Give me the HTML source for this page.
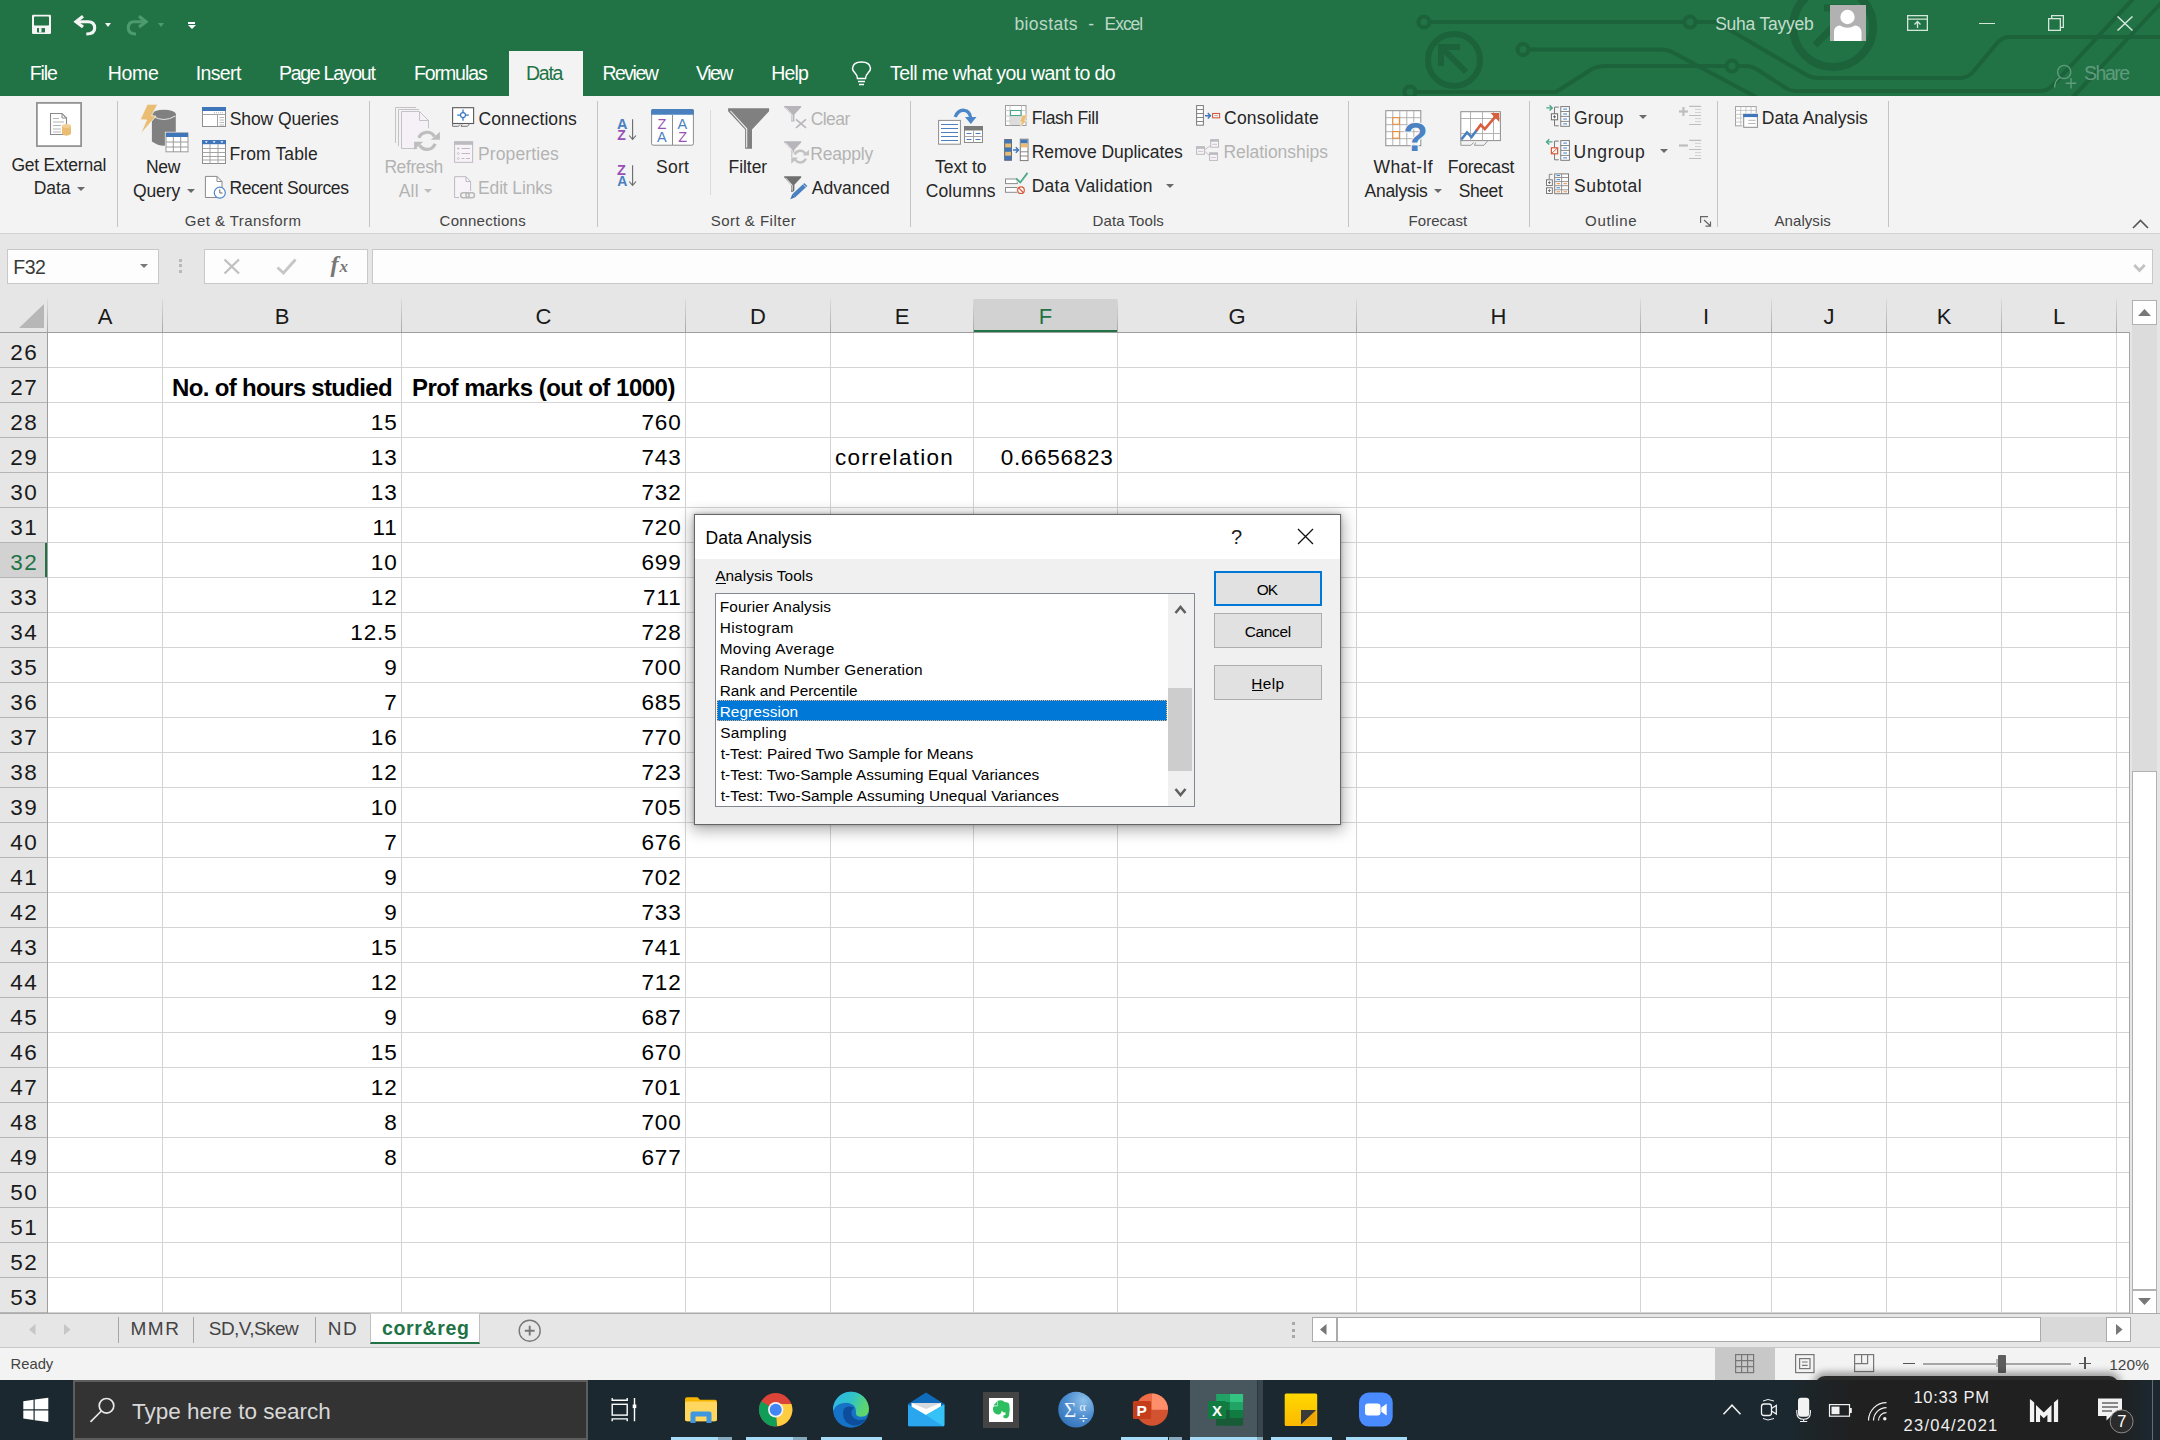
<!DOCTYPE html>
<html><head><meta charset="utf-8"><title>biostats - Excel</title>
<style>
*{box-sizing:border-box;margin:0;padding:0}
html,body{width:2160px;height:1440px;overflow:hidden;background:#fff;font-family:"Liberation Sans",sans-serif;}
.a{position:absolute;white-space:pre;line-height:1}
#titlebar{position:absolute;left:0;top:0;width:2160px;height:96px;background:#217346;overflow:hidden}
#ribbon{position:absolute;left:0;top:96px;width:2160px;height:138px;background:#f3f3f3;border-bottom:1px solid #d2d2d2}
#fbar{position:absolute;left:0;top:234px;width:2160px;height:65px;background:#e6e6e6}
#sheet{position:absolute;left:0;top:299px;width:2160px;height:1014px;background:#fff;overflow:hidden}
#tabsbar{position:absolute;left:0;top:1313px;width:2160px;height:34px;background:#e6e6e6}
#status{position:absolute;left:0;top:1347px;width:2160px;height:33px;background:#f3f3f3}
#taskbar{position:absolute;left:0;top:1380px;width:2160px;height:60px;background:#1b282f;overflow:hidden}
/* ribbon tabs */
.tab{position:absolute;top:48px;height:48px;color:#fff;font-size:19px;line-height:48px;white-space:pre;letter-spacing:-0.3px}
/* ribbon text */
.rt{position:absolute;white-space:pre;font-size:17.5px;line-height:22px;color:#262626;letter-spacing:-0.35px}
.rt.dis{color:#b1b1b1}
.rg{position:absolute;white-space:pre;font-size:16px;line-height:20px;color:#3b3b3b;letter-spacing:-0.2px;top:116px;text-align:center}
.sep{position:absolute;top:5px;width:1px;height:126px;background:#c4c4c4}
.dd{position:absolute;width:0;height:0;border-left:4px solid transparent;border-right:4px solid transparent;border-top:4px solid #6a6a6a}
.dd.dis{border-top-color:#bdbdbd}
/* sheet */
.ch{position:absolute;top:0;height:33px;font-size:22px;line-height:36px;text-align:center;color:#1a1a1a}
.rh{position:absolute;left:0;width:47px;height:35px;font-size:22.5px;letter-spacing:1.4px;padding-left:1.4px;line-height:39px;text-align:center;color:#1a1a1a}
.cell{position:absolute;height:35px;font-size:22.5px;line-height:40px;color:#000;white-space:pre}
.num{text-align:right;padding-right:3.5px;letter-spacing:0.85px}
</style></head>
<body>
<div id="titlebar"><svg class="a" style="left:1380px;top:0" width="780" height="96" viewBox="1380 0 780 96" fill="none" stroke="#1c633b" stroke-width="4" stroke-linejoin="round">
<path d="M1430 22H1684"/><circle cx="1424" cy="22" r="5.5"/><circle cx="1690" cy="22" r="5.5"/>
<path d="M1696 22H1716L1805 74Q1811 78 1819 78H1960Q1968 78 1973 72L1998 42Q2003 37 2010 37H2160"/>
<path d="M1529 49.5H1660Q1668 49.5 1674 53L1756 97"/><circle cx="1523" cy="49.5" r="5.5"/>
<path d="M1416 92H1556L1592 69Q1598 66 1606 66H1726"/><circle cx="1410" cy="92" r="5.5"/><circle cx="1732" cy="66" r="5.5"/>
<path d="M1738 66H1745Q1752 66 1758 70L1786 88Q1790 91 1798 91H2040Q2047 91 2052 86L2134 -2"/>
<path d="M2072 98L2162 2"/>
<circle cx="1833" cy="27" r="40" stroke-width="8"/>
<path d="M1815 45L1848 12M1824 8H1852V36" stroke-width="7" stroke-linejoin="miter"/>
<circle cx="1454" cy="60" r="26" stroke-width="6"/>
<path d="M1466 72L1444 50M1441 66V47H1460" stroke-width="6" stroke-linejoin="miter"/>
</svg>
<svg class="a" style="left:31px;top:14px" width="22" height="21" viewBox="31 14 22 21"><rect x="32" y="14.700" width="19" height="19.200" rx="1.200" fill="#f4f4f4"/><rect x="34" y="16.600" width="15" height="9" rx="0.800" fill="#217346"/><rect x="37" y="28.100" width="8" height="4.300" fill="#217346"/><rect x="39" y="28.100" width="2.500" height="4.300" fill="#f4f4f4"/></svg>
<svg class="a" style="left:72px;top:14px" width="26" height="23" viewBox="72 14 26 23"><path d="M83 16.300L76 21.700L83 27.100" fill="none" stroke="#f4f4f4" stroke-width="3.200"/><path d="M77 21.700H88Q94.700 21.700 94.700 28Q94.700 34 86.300 34" fill="none" stroke="#f4f4f4" stroke-width="3.100"/></svg>
<div class="dd" style="left:105px;top:23px;border-top-color:#f4f4f4;border-left-width:3.600px;border-right-width:3.600px;border-top-width:4.200px"></div>
<svg class="a" style="left:125px;top:14px" width="26" height="23" viewBox="125 14 26 23"><path d="M139 16.300L146 21.700L139 27.100" fill="none" stroke="#4e9a70" stroke-width="3.200"/><path d="M145 21.700H134Q128.300 21.700 128.300 28Q128.300 34 136 34" fill="none" stroke="#4e9a70" stroke-width="3.100"/></svg>
<div class="dd" style="left:158px;top:23px;border-top-color:#4e9a70;border-left-width:3.600px;border-right-width:3.600px;border-top-width:4.200px"></div>
<div class="a" style="left:188px;top:22px;width:7px;height:1.600px;background:#fff"></div><div class="dd" style="left:187.500px;top:25px;border-top-color:#fff;border-top-width:4.400px"></div>
<div class="a" style="left:1014.4px;top:16.0px;font-size:17.5px;color:#bcd8c6;letter-spacing:0.41px;">biostats</div>
<div class="a" style="left:1088.3px;top:16.0px;font-size:17.5px;color:#bcd8c6;letter-spacing:0.67px;">-</div>
<div class="a" style="left:1104.6px;top:16.0px;font-size:17.5px;color:#bcd8c6;letter-spacing:-1.06px;">Excel</div>
<div class="a" style="left:1715.2px;top:16.0px;font-size:17.5px;color:#c3ddcc;letter-spacing:-0.24px;">Suha Tayyeb</div>
<svg class="a" style="left:1830px;top:5px" width="36" height="36" viewBox="0 0 36 36"><rect width="36" height="36" fill="#b1b1b1"/><circle cx="17.5" cy="12" r="7.2" fill="#fff"/><path d="M4 36V27Q4 21 10 20.5Q17.5 25 25 20.5Q31 21 31.500 27V36z" fill="#fff"/></svg>
<svg class="a" style="left:1907px;top:15px" width="21" height="16" viewBox="0 0 21 16" fill="none" stroke="#d3e6da" stroke-width="1.3"><rect x="0.65" y="0.65" width="19.7" height="14.7"/><path d="M0.65 4.2H20.3M10.5 13V6.5M7.5 9.5L10.5 6.5L13.5 9.5"/></svg>
<div class="a" style="left:1979px;top:22.5px;width:16px;height:1.5px;background:#d3e6da"></div>
<svg class="a" style="left:2048px;top:15px" width="17" height="16" viewBox="0 0 17 16" fill="none" stroke="#d3e6da" stroke-width="1.3"><rect x="0.65" y="3.65" width="11.7" height="11.7"/><path d="M3.65 3.65V0.65H15.35V12.35H12.35"/></svg>
<svg class="a" style="left:2117px;top:15.500px" width="16" height="15" viewBox="0 0 16 15" fill="none" stroke="#d3e6da" stroke-width="1.5"><path d="M0.5 0.5L15.5 14.500M15.5 0.5L0.5 14.500"/></svg>
<div class="a" style="left:509px;top:51px;width:74px;height:45px;background:#f3f3f3"></div>
<div class="a" style="left:29.7px;top:64.0px;font-size:19.5px;color:#fff;letter-spacing:-1.09px;">File</div>
<div class="a" style="left:107.7px;top:64.0px;font-size:19.5px;color:#fff;letter-spacing:-0.29px;">Home</div>
<div class="a" style="left:195.7px;top:64.0px;font-size:19.5px;color:#fff;letter-spacing:-0.63px;">Insert</div>
<div class="a" style="left:278.9px;top:64.0px;font-size:19.5px;color:#fff;letter-spacing:-1.26px;">Page Layout</div>
<div class="a" style="left:413.9px;top:64.0px;font-size:19.5px;color:#fff;letter-spacing:-1.07px;">Formulas</div>
<div class="a" style="left:525.9px;top:64.0px;font-size:19.5px;color:#217346;letter-spacing:-1.21px;">Data</div>
<div class="a" style="left:602.4px;top:64.0px;font-size:19.5px;color:#fff;letter-spacing:-1.50px;">Review</div>
<div class="a" style="left:696.0px;top:64.0px;font-size:19.5px;color:#fff;letter-spacing:-1.50px;">View</div>
<div class="a" style="left:771.2px;top:64.0px;font-size:19.5px;color:#fff;letter-spacing:-0.84px;">Help</div>
<div class="a" style="left:890.1px;top:64.0px;font-size:19.5px;color:#fff;letter-spacing:-0.58px;">Tell me what you want to do</div>
<svg class="a" style="left:851px;top:61px" width="21" height="25" viewBox="0 0 21 25" fill="none" stroke="#fff" stroke-width="1.5"><path d="M6.500 17.500Q6.500 14.500 4 12Q1.500 9.500 1.500 7.500Q2 1 10.500 1Q19 1 19.500 7.500Q19.500 9.500 17 12Q14.500 14.500 14.500 17.500z"/><path d="M7 20.500H14M8 23.500H13"/></svg>
<svg class="a" style="left:2052px;top:63px" width="28" height="27" viewBox="2052 63 28 27" fill="none" stroke="#5f9c7b" stroke-width="1.400"><circle cx="2064.200" cy="72" r="6.600"/><path d="M2054.500 87.500Q2055 80 2060 77.300M2065.700 83.300H2076.300M2071 78V88.600"/></svg>
<div class="a" style="left:2084.1px;top:64.0px;font-size:19.5px;color:#5f9c7b;letter-spacing:-1.50px;">Share</div></div>
<div id="ribbon"><div class="sep" style="left:117px"></div>
<div class="sep" style="left:369px"></div>
<div class="sep" style="left:597px"></div>
<div class="sep" style="left:910px"></div>
<div class="sep" style="left:1348px"></div>
<div class="sep" style="left:1529px"></div>
<div class="sep" style="left:1717px"></div>
<div class="sep" style="left:1888px"></div>
<div class="a" style="left:710px;top:14px;width:1px;height:85px;background:#dadada"></div>
<div class="a" style="left:11.4px;top:61.0px;font-size:17.5px;color:#262626;letter-spacing:-0.21px;">Get External</div>
<div class="a" style="left:33.8px;top:84.0px;font-size:17.5px;color:#262626;letter-spacing:-0.12px;">Data</div>
<div class="dd" style="left:77px;top:90.5px"></div>
<div class="a" style="left:146.0px;top:63.0px;font-size:17.5px;color:#262626;letter-spacing:-0.37px;">New</div>
<div class="a" style="left:132.9px;top:87.0px;font-size:17.5px;color:#262626;letter-spacing:-0.06px;">Query</div>
<div class="dd" style="left:187px;top:93px"></div>
<div class="a" style="left:229.7px;top:15.0px;font-size:17.5px;color:#262626;letter-spacing:-0.08px;">Show Queries</div>
<div class="a" style="left:229.4px;top:50.0px;font-size:17.5px;color:#262626;letter-spacing:0.13px;">From Table</div>
<div class="a" style="left:229.4px;top:84.0px;font-size:17.5px;color:#262626;letter-spacing:-0.38px;">Recent Sources</div>
<div class="a" style="left:384.4px;top:63.0px;font-size:17.5px;color:#b3b3b3;letter-spacing:-0.41px;">Refresh</div>
<div class="a" style="left:398.7px;top:87.0px;font-size:17.5px;color:#b3b3b3;letter-spacing:0.23px;">All</div>
<div class="dd dis" style="left:424px;top:93px"></div>
<div class="a" style="left:478.5px;top:15.0px;font-size:17.5px;color:#262626;letter-spacing:0.10px;">Connections</div>
<div class="a" style="left:478.0px;top:50.0px;font-size:17.5px;color:#b3b3b3;letter-spacing:0.12px;">Properties</div>
<div class="a" style="left:478.0px;top:84.0px;font-size:17.5px;color:#b3b3b3;letter-spacing:-0.14px;">Edit Links</div>
<div class="a" style="left:656.0px;top:63.0px;font-size:17.5px;color:#262626;letter-spacing:0.27px;">Sort</div>
<div class="a" style="left:728.6px;top:63.0px;font-size:17.5px;color:#262626;letter-spacing:-0.07px;">Filter</div>
<div class="a" style="left:810.8px;top:15.0px;font-size:17.5px;color:#b3b3b3;letter-spacing:-0.60px;">Clear</div>
<div class="a" style="left:810.3px;top:50.0px;font-size:17.5px;color:#b3b3b3;letter-spacing:-0.20px;">Reapply</div>
<div class="a" style="left:811.7px;top:84.0px;font-size:17.5px;color:#262626;letter-spacing:0.02px;">Advanced</div>
<div class="a" style="left:935.0px;top:63.0px;font-size:17.5px;color:#262626;letter-spacing:0.00px;">Text to</div>
<div class="a" style="left:925.7px;top:87.0px;font-size:17.5px;color:#262626;letter-spacing:0.14px;">Columns</div>
<div class="a" style="left:1031.7px;top:14.0px;font-size:17.5px;color:#262626;letter-spacing:-0.32px;">Flash Fill</div>
<div class="a" style="left:1031.7px;top:48.0px;font-size:17.5px;color:#262626;letter-spacing:-0.04px;">Remove Duplicates</div>
<div class="a" style="left:1031.7px;top:82.0px;font-size:17.5px;color:#262626;letter-spacing:0.25px;">Data Validation</div>
<div class="dd" style="left:1166px;top:87.5px"></div>
<div class="a" style="left:1224.0px;top:14.0px;font-size:17.5px;color:#262626;letter-spacing:0.24px;">Consolidate</div>
<div class="a" style="left:1223.5px;top:48.0px;font-size:17.5px;color:#b3b3b3;letter-spacing:-0.05px;">Relationships</div>
<div class="a" style="left:1373.4px;top:63.0px;font-size:17.5px;color:#262626;letter-spacing:0.48px;">What-If</div>
<div class="a" style="left:1364.6px;top:87.0px;font-size:17.5px;color:#262626;letter-spacing:-0.29px;">Analysis</div>
<div class="dd" style="left:1434px;top:93px"></div>
<div class="a" style="left:1447.7px;top:63.0px;font-size:17.5px;color:#262626;letter-spacing:-0.21px;">Forecast</div>
<div class="a" style="left:1458.8px;top:87.0px;font-size:17.5px;color:#262626;letter-spacing:-0.44px;">Sheet</div>
<div class="a" style="left:1574.0px;top:14.0px;font-size:17.5px;color:#262626;letter-spacing:0.24px;">Group</div>
<div class="dd" style="left:1639px;top:18.799999999999997px"></div>
<div class="a" style="left:1573.6px;top:48.0px;font-size:17.5px;color:#262626;letter-spacing:0.67px;">Ungroup</div>
<div class="dd" style="left:1659.5px;top:52.80000000000001px"></div>
<div class="a" style="left:1574.1px;top:82.0px;font-size:17.5px;color:#262626;letter-spacing:0.47px;">Subtotal</div>
<div class="a" style="left:1761.8px;top:14.0px;font-size:17.5px;color:#262626;letter-spacing:-0.00px;">Data Analysis</div>
<div class="a" style="left:184.8px;top:117.0px;font-size:15px;color:#444;letter-spacing:0.44px;">Get &amp; Transform</div>
<div class="a" style="left:439.6px;top:117.0px;font-size:15px;color:#444;letter-spacing:0.27px;">Connections</div>
<div class="a" style="left:710.7px;top:117.0px;font-size:15px;color:#444;letter-spacing:0.49px;">Sort &amp; Filter</div>
<div class="a" style="left:1092.6px;top:117.0px;font-size:15px;color:#444;letter-spacing:0.07px;">Data Tools</div>
<div class="a" style="left:1408.6px;top:117.0px;font-size:15px;color:#444;letter-spacing:0.02px;">Forecast</div>
<div class="a" style="left:1585.1px;top:117.0px;font-size:15px;color:#444;letter-spacing:0.68px;">Outline</div>
<div class="a" style="left:1774.5px;top:117.0px;font-size:15px;color:#444;letter-spacing:0.07px;">Analysis</div>
<svg class="a" style="left:1700px;top:120px" width="12" height="11" viewBox="0 0 12 11" fill="none" stroke="#666" stroke-width="1.2"><path d="M0.6 7V0.6H8M4 4L10.500 10M10.500 5.500V10.200H5.500"/></svg>
<svg class="a" style="left:2132px;top:123px" width="17" height="10" viewBox="0 0 17 10" fill="none" stroke="#555" stroke-width="1.6"><path d="M1 9L8.500 1.500L16 9"/></svg>
<svg class="a" style="left:35px;top:5px" width="48" height="47" viewBox="35 101 48 47" ><rect x="36.900" y="102.900" width="44.200" height="43.200" fill="#fff" stroke="#949494" stroke-width="1.8"/><path d="M50.500 113.500H62L66.500 118V134.500H50.500z" fill="#fff" stroke="#8a8a8a" stroke-width="1.1"/><path d="M62 113.500V118H66.500" fill="none" stroke="#8a8a8a" stroke-width="1"/><path d="M53 118.500H59M53 122H64M53 125.500H61M53 129H61M53 132H61" stroke="#b5b5b5" stroke-width="1"/><path d="M62 126V134Q66.500 137.500 71 134V126z" fill="#eabd73"/><ellipse cx="66.500" cy="126" rx="4.500" ry="1.900" fill="#f3d096"/></svg>
<svg class="a" style="left:139px;top:7px" width="51" height="50" viewBox="139 103 51 50" ><path d="M151.900 114.500V141.500Q163.800 150 175.800 141.500V114.500z" fill="#808080"/><ellipse cx="163.850" cy="114.300" rx="11.950" ry="4.600" fill="#808080"/><path d="M152.500 116Q163.800 123 175.300 116" fill="none" stroke="#e9e9e9" stroke-width="1"/><path d="M147.300 104.300H157.700L151.600 115.600L156 116.200L140.700 134L146.600 119.900L140.200 119.700z" fill="#eabd73" stroke="#f3f3f3" stroke-width="0.8"/><rect x="165.400" y="132.300" width="23.200" height="20" fill="#fff" stroke="#f3f3f3" stroke-width="1"/><rect x="166" y="133" width="22" height="18.800" fill="#fff" stroke="#9a9a9a" stroke-width="1"/><rect x="166" y="132.800" width="22" height="4.200" fill="#3f76ba"/><path d="M166 142H188M166 147H188M173.300 137V152M180.700 137V152" stroke="#9a9a9a" stroke-width="1"/></svg>
<svg class="a" style="left:201px;top:10px" width="26" height="22" viewBox="201 106 26 22" ><rect x="202.500" y="107.500" width="23" height="19" fill="#fff" stroke="#8e8e8e" stroke-width="1"/><rect x="202" y="107" width="24" height="4" fill="#3f76ba"/><path d="M202.500 114.500H225.500M217.500 114.500V126.500" stroke="#a5a5a5" stroke-width="1"/><path d="M214 112.700H224" stroke="#b5b5b5" stroke-width="1" stroke-dasharray="1 1"/><path d="M219.500 117.500H224M219.500 120H224M219.500 122.500H224M219.500 125H224" stroke="#b0b0b0" stroke-width="0.9"/></svg>
<svg class="a" style="left:201px;top:43px" width="26" height="26" viewBox="201 139 26 26" ><rect x="202.500" y="140.500" width="23" height="23" fill="#fff" stroke="#8e8e8e" stroke-width="1"/><rect x="202" y="140" width="24" height="4.200" fill="#3f76ba"/><path d="M202.500 148.500H225.500M202.500 152.500H225.500M202.500 156.500H225.500M202.500 160H225.500M210 144V163.500M218 144V163.500" stroke="#a3a3a3" stroke-width="1"/><path d="M204.800 141.200H207.800L206.300 143zM212.600 141.200H215.600L214.100 143zM220.400 141.200H223.400L221.900 143z" fill="#fff"/></svg>
<svg class="a" style="left:203px;top:78px" width="25" height="27" viewBox="203 174 25 27" ><path d="M205.400 176.400H217L222 181.500V197.500H205.400z" fill="#fff" stroke="#8a8a8a" stroke-width="1"/><path d="M217 176.400V181.500H222" fill="none" stroke="#8a8a8a" stroke-width="1"/><circle cx="219.800" cy="192.700" r="5.500" fill="#fff" stroke="#4a84cc" stroke-width="1.200"/><path d="M219.800 189.500V193H222.500" fill="none" stroke="#666" stroke-width="1"/></svg>
<svg class="a" style="left:393px;top:9px" width="48" height="48" viewBox="393 105 48 48" ><path d="M395.500 107.500H416M398.500 109.500H419M395.500 107.500V143M398.500 109.500V146" stroke="#c4c2c7" stroke-width="1" fill="none"/><path d="M401.500 111.500H419.500L428.500 120.500V148.500H401.500z" fill="#f5f1f7" stroke="#c4c2c7" stroke-width="1"/><path d="M419.500 111.500V120.500H428.500" fill="none" stroke="#c4c2c7" stroke-width="1"/><circle cx="427" cy="140.800" r="12.500" fill="#f3f3f3"/><path d="M418.9 137.9A8.6 8.6 0 0 1 434.4 136.5M435.1 143.7A8.6 8.6 0 0 1 419.6 145.1" fill="none" stroke="#bebebe" stroke-width="3.2"/><path d="M430.8 139.8H439.92V131.64000000000001z" fill="#bebebe"/><path d="M423.2 141.8H414.08V149.96z" fill="#bebebe"/></svg>
<svg class="a" style="left:451px;top:10px" width="25" height="22" viewBox="451 106 25 22" ><rect x="452.600" y="107.700" width="21" height="15.800" fill="#fff" stroke="#5a5a5a" stroke-width="1.100"/><path d="M452.600 123.500V126.300H458.500L460 124.500M461 126.300H467.500L469.500 123.800M461 126.300L462 124.500" fill="none" stroke="#777" stroke-width="1"/><circle cx="463" cy="115.100" r="2.500" fill="#fff" stroke="#3b78c4" stroke-width="1.200"/><path d="M463 109.500V112.600M463 117.600V120.800M457.200 115.100H460.500M465.500 115.100H468.800" stroke="#3b78c4" stroke-width="1.300"/></svg>
<svg class="a" style="left:453px;top:44px" width="22" height="24" viewBox="453 140 22 24" ><rect x="454.600" y="141.800" width="18" height="20.500" fill="#f7f3f8" stroke="#bdbbc0" stroke-width="1"/><rect x="454.100" y="141.300" width="19" height="3.500" fill="#bdbbc0"/><circle cx="458.300" cy="148.500" r="1.100" fill="#bdbbc0"/><circle cx="458.300" cy="153.500" r="1" fill="none" stroke="#bdbbc0" stroke-width="0.700"/><circle cx="458.300" cy="158.500" r="1" fill="none" stroke="#bdbbc0" stroke-width="0.700"/><path d="M461.500 148.500H470M461.500 153.500H470M461.500 158.500H464.500M466 158.500H470" stroke="#bdbbc0" stroke-width="1"/></svg>
<svg class="a" style="left:453px;top:79px" width="24" height="26" viewBox="453 175 24 26" ><path d="M454.600 176.700H466L470.600 181.500V197.500H454.600z" fill="#f7f3f8" stroke="#bdbbc0" stroke-width="1"/><path d="M466 176.700V181.500H470.600" fill="none" stroke="#bdbbc0" stroke-width="1"/><rect x="459" y="191" width="17" height="9" fill="#f3f3f3"/><rect x="460.700" y="192.800" width="8.500" height="5" rx="2.500" fill="none" stroke="#b9b9b9" stroke-width="1.500"/><rect x="466" y="192.800" width="8.500" height="5" rx="2.500" fill="none" stroke="#b9b9b9" stroke-width="1.500"/></svg>
<svg class="a" style="left:615px;top:20px" width="23" height="26" viewBox="615 116 23 26" ><text x="617" y="128.6" font-family="Liberation Sans" font-weight="bold" font-size="14.500" fill="#4a80c0">A</text><text x="617.300" y="139.8" font-family="Liberation Sans" font-weight="bold" font-size="14" fill="#9850b4">Z</text><path d="M632.600 119.2V139.2M629.200 135.5L632.600 139.4L636 135.5" fill="none" stroke="#6a6a6a" stroke-width="1.100"/></svg>
<svg class="a" style="left:615px;top:66px" width="23" height="26" viewBox="615 162 23 26" ><text x="617" y="174.6" font-family="Liberation Sans" font-weight="bold" font-size="14.500" fill="#9850b4">Z</text><text x="617.300" y="185.79999999999998" font-family="Liberation Sans" font-weight="bold" font-size="14" fill="#4a80c0">A</text><path d="M632.600 165.2V185.2M629.200 181.5L632.600 185.39999999999998L636 181.5" fill="none" stroke="#6a6a6a" stroke-width="1.100"/></svg>
<svg class="a" style="left:650px;top:12px" width="45" height="39" viewBox="650 108 45 39" ><rect x="651.600" y="109.500" width="41.800" height="35.700" rx="1.500" fill="#fff" stroke="#8c8c8c" stroke-width="1"/><path d="M651.100 114.800V110.500Q651.100 109 652.600 109H692.400Q693.900 109 693.900 110.500V114.800z" fill="#4a80bd"/><path d="M672.500 114.800V145" stroke="#8c8c8c" stroke-width="1"/><g font-family="Liberation Sans" font-size="14.500"><text x="657.500" y="128.700" fill="#9850b4">Z</text><text x="657" y="141.900" fill="#4a80c0">A</text><text x="677.600" y="128.700" fill="#4a80c0">A</text><text x="678.200" y="141.900" fill="#9850b4">Z</text></g></svg>
<svg class="a" style="left:727px;top:11px" width="44" height="43" viewBox="727 107 44 43" ><path d="M728.100 108.200H769.100V111.200L752 129.500V148.700H745.100V129.500L728.100 111.200z" fill="#808080"/><path d="M730.500 111L746.700 128.800V147.500" fill="none" stroke="#f1f1f1" stroke-width="1.100"/></svg>
<svg class="a" style="left:783px;top:9px" width="26" height="25" viewBox="783 105 26 25" ><path d="M784.2 106.1H801.2V107.3L794.4000000000001 114.6V121.6H791.0V114.6L784.2 107.3z" fill="#b7b5ba"/><path d="M785.5 107.69999999999999L792.1 114.89999999999999V120.6" fill="none" stroke="#f3f3f3" stroke-width="1"/><path d="M796 119.300L806 127.800M806 119.300L796 127.800" stroke="#f3f3f3" stroke-width="3.500"/><path d="M796 119.300L806 127.800M806 119.300L796 127.800" stroke="#b7b5ba" stroke-width="1.600"/></svg>
<svg class="a" style="left:783px;top:44px" width="26" height="26" viewBox="783 140 26 26" ><path d="M784.2 141.3H801.2V142.5L794.4000000000001 149.8V156.8H791.0V149.8L784.2 142.5z" fill="#b7b5ba"/><path d="M785.5 142.9L792.1 150.10000000000002V155.8" fill="none" stroke="#f3f3f3" stroke-width="1"/><circle cx="800.300" cy="156.600" r="8" fill="#f3f3f3"/><path d="M794.8 154.6A5.8 5.8 0 0 1 805.3 153.7M805.8 158.6A5.8 5.8 0 0 1 795.3 159.5" fill="none" stroke="#c2c2c2" stroke-width="2.4"/><path d="M802.4999999999999 155.6H809.3399999999999V149.48z" fill="#c2c2c2"/><path d="M798.1 157.6H791.26V163.72z" fill="#c2c2c2"/></svg>
<svg class="a" style="left:783px;top:79px" width="26" height="26" viewBox="783 175 26 26" ><path d="M784.2 176.2H801.2V177.39999999999998L794.4000000000001 184.7V191.7H791.0V184.7L784.2 177.39999999999998z" fill="#6f6f6f"/><path d="M785.5 177.79999999999998L792.1 185.0V190.7" fill="none" stroke="#f3f3f3" stroke-width="1"/><path d="M804.300 182.500L807.800 185.800L795.300 197.800L791.800 194.500z" fill="#f3f3f3" stroke="#f3f3f3" stroke-width="2"/><path d="M804.300 183L807.300 186L795.300 197.300L792.300 194.300z" fill="#4a80c0"/><path d="M792.300 194.300L795.300 197.300L790.300 199.200z" fill="#3f73b5"/><path d="M803 184.300L806 187.300" stroke="#f3f3f3" stroke-width="0.800"/></svg>
<svg class="a" style="left:937px;top:10px" width="48" height="41" viewBox="937 106 48 41" ><rect x="938.600" y="120.400" width="21.800" height="23.800" fill="#fff" stroke="#8c8c8c" stroke-width="1"/><path d="M941 124.500H958M941 128.500H958M941 132.500H958M941 136.500H958M941 140.500H958" stroke="#4a80c0" stroke-width="1.100"/><rect x="964.500" y="126.500" width="18" height="16" fill="#fff" stroke="#8c8c8c" stroke-width="1"/><rect x="964" y="126" width="19" height="4.500" fill="#7a7a7a"/><path d="M973.500 130.500V142.500M964.500 136.500H982.500" stroke="#a5a5a5" stroke-width="1"/><path d="M966.500 133.500H971.500M975.500 133.500H980.500M966.500 139.500H971.500M975.500 139.500H980.500" stroke="#4a80c0" stroke-width="1.100"/><path d="M955.200 117Q958 109.800 964 110.300Q970 110.800 970.800 118.500" fill="none" stroke="#4b86c8" stroke-width="3.300"/><path d="M965 117H976.500L970.800 124z" fill="#4b86c8"/></svg>
<svg class="a" style="left:1004px;top:8px" width="26" height="25" viewBox="1004 104 26 25" ><rect x="1005.500" y="105.500" width="20.500" height="20" fill="#fff" stroke="#9b9b9b" stroke-width="1"/><path d="M1005.500 110.500H1026M1005.500 116H1026M1005.500 121H1026M1010 105.500V125.500M1021.500 105.500V125.500" stroke="#c8c8c8" stroke-width="1"/><rect x="1010.500" y="116.500" width="10.500" height="8.500" fill="#dcdcdc"/><rect x="1010.500" y="110.500" width="10.500" height="5" fill="#fff" stroke="#4da78b" stroke-width="1.100"/><path d="M1022.400 115.300L1027.900 114.700L1024.500 120.500H1027.200L1019.200 127.900L1022 121.900H1019.200z" fill="#eabd73" stroke="#f3f3f3" stroke-width="0.600"/></svg>
<svg class="a" style="left:1003px;top:42px" width="27" height="24" viewBox="1003 138 27 24" ><rect x="1004.300" y="139.200" width="7.600" height="21.400" fill="#3f76ba"/><rect x="1005.100" y="143.500" width="6" height="3.900" fill="#eabd73"/><rect x="1005.100" y="151.800" width="6" height="3.900" fill="#eabd73"/><rect x="1004.700" y="139.600" width="6.800" height="20.600" fill="none" stroke="#6a6a6a" stroke-width="0.800"/><rect x="1020.300" y="139.200" width="7.700" height="21.400" fill="#fff" stroke="#7a7a7a" stroke-width="1"/><rect x="1020.800" y="139.700" width="6.700" height="3.800" fill="#3f76ba"/><rect x="1020.800" y="143.500" width="6.700" height="3.900" fill="#eabd73"/><path d="M1020.300 151.800H1028M1020.300 156H1028" stroke="#7a7a7a" stroke-width="0.900"/><path d="M1013 150H1018M1015.800 147.300L1018.500 150L1015.800 152.700" fill="none" stroke="#3f76ba" stroke-width="1.400"/></svg>
<svg class="a" style="left:1004px;top:75px" width="26" height="24" viewBox="1004 171 26 24" ><rect x="1005.500" y="179" width="11.800" height="4.600" fill="#fff" stroke="#8c8c8c" stroke-width="1"/><rect x="1005.500" y="187.500" width="11.800" height="4.800" fill="#fff" stroke="#8c8c8c" stroke-width="1"/><path d="M1016 178.500L1020.300 182.500L1027.500 172.900" fill="none" stroke="#f3f3f3" stroke-width="3.200"/><path d="M1016 178.500L1020.300 182.500L1027.500 172.900" fill="none" stroke="#4da78b" stroke-width="1.800"/><circle cx="1021" cy="190.200" r="4.600" fill="#f3f3f3"/><circle cx="1021" cy="190.200" r="3.300" fill="#fff" stroke="#d9583a" stroke-width="1.200"/><path d="M1018.700 187.900L1023.300 192.500" stroke="#d9583a" stroke-width="1.200"/></svg>
<svg class="a" style="left:1195px;top:8px" width="27" height="23" viewBox="1195 104 27 23" ><rect x="1196.600" y="105.600" width="6.800" height="19.600" fill="#fff" stroke="#7a7a7a" stroke-width="1"/><path d="M1196.600 109.500H1203.400M1196.600 113.500H1203.400M1196.600 117.500H1203.400M1196.600 121.500H1203.400" stroke="#7a7a7a" stroke-width="0.900"/><path d="M1205 115.700H1210M1207.800 113L1210.500 115.700L1207.800 118.400" fill="none" stroke="#3f76ba" stroke-width="1.400"/><rect x="1212.600" y="113.500" width="7" height="4.300" fill="#fff" stroke="#d9583a" stroke-width="1.100"/><path d="M1214.300 115.700H1218" stroke="#9a9a9a" stroke-width="0.900"/></svg>
<svg class="a" style="left:1195px;top:42px" width="26" height="24" viewBox="1195 138 26 24" ><path d="M1205 149.500L1210.500 145.500M1205 151.500L1209.500 155.500" stroke="#bcbabf" stroke-width="0.900"/><rect x="1196.6" y="146.9" width="7.800" height="7.400" fill="#f7f3f8" stroke="#bcbabf" stroke-width="1"/><rect x="1196.1" y="146.4" width="8.800" height="2.400" fill="#bcbabf"/><path d="M1198.1 151.4H1202.8999999999999" stroke="#bcbabf" stroke-width="0.800"/><rect x="1210.7" y="139.8" width="7.800" height="7.400" fill="#f7f3f8" stroke="#bcbabf" stroke-width="1"/><rect x="1210.2" y="139.3" width="8.800" height="2.400" fill="#bcbabf"/><path d="M1212.2 144.3H1217.0" stroke="#bcbabf" stroke-width="0.800"/><rect x="1209.6" y="153.0" width="7.800" height="7.400" fill="#f7f3f8" stroke="#bcbabf" stroke-width="1"/><rect x="1209.1" y="152.5" width="8.800" height="2.400" fill="#bcbabf"/><path d="M1211.1 157.5H1215.8999999999999" stroke="#bcbabf" stroke-width="0.800"/></svg>
<svg class="a" style="left:1384px;top:13px" width="45" height="43" viewBox="1384 109 45 43" ><rect x="1385.800" y="110.700" width="35" height="35" fill="#fff" stroke="#8c8c8c" stroke-width="1"/><path d="M1385.800 117.7H1420.800M1385.800 124.7H1420.800M1385.800 131.7H1420.800M1385.800 138.7H1420.800M1392.8 110.700V145.700M1399.8 110.700V145.700M1406.8 110.700V145.700M1413.8 110.700V145.700" stroke="#a9a9a9" stroke-width="0.900"/><rect x="1392.800" y="117.700" width="6.600" height="6.600" fill="#fff" stroke="#e8893a" stroke-width="1.100"/><rect x="1392.800" y="131.600" width="6.600" height="6.600" fill="#fff" stroke="#e8893a" stroke-width="1.100"/><text x="1403.300" y="150.900" font-family="Liberation Sans" font-weight="bold" font-size="40" fill="#4a82c3" stroke="#f3f3f3" stroke-width="2.200" paint-order="stroke">?</text></svg>
<svg class="a" style="left:1459px;top:14px" width="44" height="37" viewBox="1459 110 44 37" ><rect x="1460.800" y="111.700" width="39.600" height="28.900" fill="#fff" stroke="#8c8c8c" stroke-width="1"/><path d="M1460.800 118.500H1500.400M1460.800 133.500H1500.400M1470.500 111.700V140.600M1482.500 111.700V140.600M1493.500 111.700V140.600" stroke="#ababab" stroke-width="0.900"/><path d="M1460.800 140.600V145.300H1471L1473.500 142.500M1474.500 145.300H1484L1487.500 141M1474.500 145.300L1475.500 142.500" fill="none" stroke="#9a9a9a" stroke-width="1"/><path d="M1461.300 139.500L1467 132.400L1471.500 137L1477.300 129.500" fill="none" stroke="#4a80c0" stroke-width="2.600" stroke-linejoin="miter"/><path d="M1476.500 130.500L1480.700 124.800L1484.800 129L1495.800 116.200" fill="none" stroke="#d85e3e" stroke-width="2.600" stroke-linejoin="miter"/><path d="M1490.500 113H1499.300V122z" fill="#d85e3e"/></svg>
<svg class="a" style="left:1545px;top:8px" width="26" height="24" viewBox="1545 104 26 24" ><rect x="1560.800" y="106.6" width="8.600" height="19.700" fill="#fff" stroke="#7a7a7a" stroke-width="1"/><path d="M1560.800 111.5H1569.400M1560.800 116.39999999999999H1569.400M1560.800 121.39999999999999H1569.400" stroke="#7a7a7a" stroke-width="0.900"/><path d="M1563.200 109.1H1567M1563.200 114.0H1567M1563.200 119.0H1567M1563.200 123.89999999999999H1567" stroke="#3f7fd0" stroke-width="1"/><path d="M1558.800 107.1H1554.500V125.8H1558.800" fill="none" stroke="#7a7a7a" stroke-width="1"/><rect x="1551.400" y="113.8" width="6.200" height="6" fill="#fff" stroke="#6a6a6a" stroke-width="1"/><path d="M1553 116.8H1556M1554.500 115.3V118.3" stroke="#555" stroke-width="0.900"/><path d="M1546.300 107.89999999999999H1552M1549.500 105.19999999999999L1552.300 107.89999999999999L1549.500 110.6" fill="none" stroke="#4da78b" stroke-width="1.400"/></svg>
<svg class="a" style="left:1545px;top:42px" width="26" height="24" viewBox="1545 138 26 24" ><rect x="1560.800" y="140.6" width="8.600" height="19.700" fill="#fff" stroke="#7a7a7a" stroke-width="1"/><path d="M1560.800 145.5H1569.400M1560.800 150.4H1569.400M1560.800 155.4H1569.400" stroke="#7a7a7a" stroke-width="0.900"/><path d="M1563.200 143.1H1567M1563.200 148.0H1567M1563.200 153.0H1567M1563.200 157.9H1567" stroke="#3f7fd0" stroke-width="1"/><path d="M1558.800 141.1H1554.500V159.79999999999998H1558.800" fill="none" stroke="#7a7a7a" stroke-width="1"/><rect x="1551.400" y="147.79999999999998" width="6.200" height="6" fill="#fff" stroke="#d9583a" stroke-width="1.200"/><path d="M1552 153.1L1557 148.4" stroke="#d9583a" stroke-width="1"/><path d="M1552.500 141.9H1546.800M1549.300 139.2L1546.500 141.9L1549.300 144.6" fill="none" stroke="#4da78b" stroke-width="1.400"/></svg>
<svg class="a" style="left:1545px;top:76px" width="26" height="24" viewBox="1545 172 26 24" ><rect x="1554.700" y="173.9" width="13.800" height="19.800" fill="#fff" stroke="#7a7a7a" stroke-width="1"/><path d="M1554.700 177.5H1568.500M1554.700 181.6H1568.500M1554.700 185.7H1568.500M1554.700 189.8H1568.500M1561.600 173.9V193.70000000000002" stroke="#8a8a8a" stroke-width="0.900"/><path d="M1556.500 175.6H1560" stroke="#3f7fd0" stroke-width="1"/><path d="M1556.500 179.7H1560" stroke="#3f7fd0" stroke-width="1"/><path d="M1556.500 183.7H1560M1563.5 183.7H1567" stroke="#e8893a" stroke-width="1"/><path d="M1556.500 187.8H1560" stroke="#3f7fd0" stroke-width="1"/><path d="M1556.500 191.8H1560M1563.5 191.8H1567" stroke="#e8893a" stroke-width="1"/><path d="M1552.500 174.300H1549.300V179" fill="none" stroke="#7a7a7a" stroke-width="0.900"/><rect x="1546.500" y="179.800" width="5.800" height="5.600" fill="#fff" stroke="#6a6a6a" stroke-width="0.900"/><path d="M1548 182.600H1550.800M1549.400 181.200V184" stroke="#555" stroke-width="0.800"/><rect x="1546.500" y="187.800" width="5.800" height="5.600" fill="#fff" stroke="#6a6a6a" stroke-width="0.900"/><path d="M1548 190.600H1550.800M1549.400 189.200V192" stroke="#555" stroke-width="0.800"/></svg>
<svg class="a" style="left:1678px;top:8px" width="25" height="23" viewBox="1678 104 25 23" ><path d="M1689.100 106.4H1701.100M1689.100 115.5H1701.100M1689.100 124.5H1701.100" stroke="#bdbdbd" stroke-width="1.100"/><path d="M1695 109.4H1701.100M1695 112.5H1701.100M1695 118.60000000000001H1701.100M1695 121.60000000000001H1701.100" stroke="#d2d2d2" stroke-width="1"/><path d="M1679 111.5H1687.900" stroke="#bdbdbd" stroke-width="2.200"/><path d="M1683.450 107.10000000000001V115.9" stroke="#bdbdbd" stroke-width="2.200"/></svg>
<svg class="a" style="left:1678px;top:42px" width="25" height="23" viewBox="1678 138 25 23" ><path d="M1689.100 140.4H1701.100M1689.100 149.5H1701.100M1689.100 158.5H1701.100" stroke="#bdbdbd" stroke-width="1.100"/><path d="M1695 143.4H1701.100M1695 146.5H1701.100M1695 152.6H1701.100M1695 155.6H1701.100" stroke="#d2d2d2" stroke-width="1"/><path d="M1679 145.5H1687.900" stroke="#bdbdbd" stroke-width="2.200"/></svg>
<svg class="a" style="left:1734px;top:9px" width="26" height="25" viewBox="1734 105 26 25" ><rect x="1735.500" y="106.600" width="20.700" height="19.200" fill="#fff" stroke="#a2a2a2" stroke-width="1"/><path d="M1735.500 110.4H1756.200M1735.500 114.3H1756.200M1735.500 118.1H1756.200M1735.500 122.0H1756.200M1740.7 106.600V125.800M1745.9 106.600V125.800M1751.1 106.600V125.800" stroke="#c2c2c2" stroke-width="0.900"/><rect x="1742.200" y="113" width="16.500" height="15.600" fill="#f3f3f3"/><rect x="1743.700" y="114.400" width="13.700" height="12.900" fill="#fff" stroke="#8a8a8a" stroke-width="1"/><rect x="1743.200" y="113.900" width="14.700" height="3.200" fill="#3f76ba"/><path d="M1748.200 120.300H1755.600M1748.200 123.500H1755.600" stroke="#b5b5b5" stroke-width="1"/></svg></div>
<div id="fbar"><div class="a" style="left:7px;top:15px;width:152px;height:35px;background:#fdfdfd;border:1px solid #c8c8c8"></div>
<div class="a" style="left:13.2px;top:24.0px;font-size:19.5px;color:#3a3a3a;letter-spacing:-0.45px;">F32</div>
<div class="dd" style="left:140px;top:30px;border-top-color:#777"></div>
<div class="a" style="left:179px;top:24.5px;width:3px;height:3px;background:#b9b9b9"></div>
<div class="a" style="left:179px;top:30px;width:3px;height:3px;background:#b9b9b9"></div>
<div class="a" style="left:179px;top:35.5px;width:3px;height:3px;background:#b9b9b9"></div>
<div class="a" style="left:204px;top:15px;width:164px;height:35px;background:#fdfdfd;border:1px solid #c8c8c8"></div>
<div class="a" style="left:372px;top:15px;width:1781px;height:35px;background:#fdfdfd;border:1px solid #c8c8c8"></div>
<svg class="a" style="left:223px;top:24px" width="18" height="17" viewBox="0 0 18 17"><path d="M1.500 1.500L16 15.500M16 1.500L1.500 15.500" stroke="#c0c0c0" stroke-width="2.300" fill="none"/></svg>
<svg class="a" style="left:276px;top:24px" width="21" height="17" viewBox="0 0 21 17"><path d="M1.500 9.500L7.500 15L19.500 1.500" stroke="#c6c6c6" stroke-width="2.800" fill="none"/></svg>
<div class="a" style="left:330.5px;top:18.0px;font-size:24px;color:#777;letter-spacing:-1.02px;font-weight:bold;font-style:italic;font-family:'Liberation Serif';">f</div>
<div class="a" style="left:339.5px;top:24.0px;font-size:17px;color:#777;letter-spacing:1.17px;font-weight:bold;font-style:italic;font-family:'Liberation Serif';">x</div>
<svg class="a" style="left:2133px;top:29px" width="13" height="10" viewBox="0 0 13 10"><path d="M1.300 2L6.500 7.500L11.700 2" stroke="#c2c2c2" stroke-width="2.800" fill="none"/></svg></div>
<div id="sheet"><div class="a" style="left:0;top:0;width:2160px;height:33px;background:#e6e6e6"></div>
<div class="a" style="left:0;top:33px;width:47px;height:981px;background:#e6e6e6"></div>
<div class="a" style="left:2130px;top:0;width:30px;height:1014px;background:#e6e6e6"></div>
<div class="a" style="left:974px;top:0;width:143px;height:33px;background:#d2d2d2;border-bottom:2px solid #217346"></div>
<div class="a" style="left:0;top:244px;width:47px;height:34px;background:#d2d2d2;border-right:2px solid #217346"></div>
<div class="a" style="left:48px;top:68px;width:2081px;height:1px;background:#d4d4d4"></div>
<div class="a" style="left:0;top:68px;width:47px;height:1px;background:#b5b5b5"></div>
<div class="a" style="left:48px;top:103px;width:2081px;height:1px;background:#d4d4d4"></div>
<div class="a" style="left:0;top:103px;width:47px;height:1px;background:#b5b5b5"></div>
<div class="a" style="left:48px;top:138px;width:2081px;height:1px;background:#d4d4d4"></div>
<div class="a" style="left:0;top:138px;width:47px;height:1px;background:#b5b5b5"></div>
<div class="a" style="left:48px;top:173px;width:2081px;height:1px;background:#d4d4d4"></div>
<div class="a" style="left:0;top:173px;width:47px;height:1px;background:#b5b5b5"></div>
<div class="a" style="left:48px;top:208px;width:2081px;height:1px;background:#d4d4d4"></div>
<div class="a" style="left:0;top:208px;width:47px;height:1px;background:#b5b5b5"></div>
<div class="a" style="left:48px;top:243px;width:2081px;height:1px;background:#d4d4d4"></div>
<div class="a" style="left:0;top:243px;width:47px;height:1px;background:#b5b5b5"></div>
<div class="a" style="left:48px;top:278px;width:2081px;height:1px;background:#d4d4d4"></div>
<div class="a" style="left:0;top:278px;width:47px;height:1px;background:#b5b5b5"></div>
<div class="a" style="left:48px;top:313px;width:2081px;height:1px;background:#d4d4d4"></div>
<div class="a" style="left:0;top:313px;width:47px;height:1px;background:#b5b5b5"></div>
<div class="a" style="left:48px;top:348px;width:2081px;height:1px;background:#d4d4d4"></div>
<div class="a" style="left:0;top:348px;width:47px;height:1px;background:#b5b5b5"></div>
<div class="a" style="left:48px;top:383px;width:2081px;height:1px;background:#d4d4d4"></div>
<div class="a" style="left:0;top:383px;width:47px;height:1px;background:#b5b5b5"></div>
<div class="a" style="left:48px;top:418px;width:2081px;height:1px;background:#d4d4d4"></div>
<div class="a" style="left:0;top:418px;width:47px;height:1px;background:#b5b5b5"></div>
<div class="a" style="left:48px;top:453px;width:2081px;height:1px;background:#d4d4d4"></div>
<div class="a" style="left:0;top:453px;width:47px;height:1px;background:#b5b5b5"></div>
<div class="a" style="left:48px;top:488px;width:2081px;height:1px;background:#d4d4d4"></div>
<div class="a" style="left:0;top:488px;width:47px;height:1px;background:#b5b5b5"></div>
<div class="a" style="left:48px;top:523px;width:2081px;height:1px;background:#d4d4d4"></div>
<div class="a" style="left:0;top:523px;width:47px;height:1px;background:#b5b5b5"></div>
<div class="a" style="left:48px;top:558px;width:2081px;height:1px;background:#d4d4d4"></div>
<div class="a" style="left:0;top:558px;width:47px;height:1px;background:#b5b5b5"></div>
<div class="a" style="left:48px;top:593px;width:2081px;height:1px;background:#d4d4d4"></div>
<div class="a" style="left:0;top:593px;width:47px;height:1px;background:#b5b5b5"></div>
<div class="a" style="left:48px;top:628px;width:2081px;height:1px;background:#d4d4d4"></div>
<div class="a" style="left:0;top:628px;width:47px;height:1px;background:#b5b5b5"></div>
<div class="a" style="left:48px;top:663px;width:2081px;height:1px;background:#d4d4d4"></div>
<div class="a" style="left:0;top:663px;width:47px;height:1px;background:#b5b5b5"></div>
<div class="a" style="left:48px;top:698px;width:2081px;height:1px;background:#d4d4d4"></div>
<div class="a" style="left:0;top:698px;width:47px;height:1px;background:#b5b5b5"></div>
<div class="a" style="left:48px;top:733px;width:2081px;height:1px;background:#d4d4d4"></div>
<div class="a" style="left:0;top:733px;width:47px;height:1px;background:#b5b5b5"></div>
<div class="a" style="left:48px;top:768px;width:2081px;height:1px;background:#d4d4d4"></div>
<div class="a" style="left:0;top:768px;width:47px;height:1px;background:#b5b5b5"></div>
<div class="a" style="left:48px;top:803px;width:2081px;height:1px;background:#d4d4d4"></div>
<div class="a" style="left:0;top:803px;width:47px;height:1px;background:#b5b5b5"></div>
<div class="a" style="left:48px;top:838px;width:2081px;height:1px;background:#d4d4d4"></div>
<div class="a" style="left:0;top:838px;width:47px;height:1px;background:#b5b5b5"></div>
<div class="a" style="left:48px;top:873px;width:2081px;height:1px;background:#d4d4d4"></div>
<div class="a" style="left:0;top:873px;width:47px;height:1px;background:#b5b5b5"></div>
<div class="a" style="left:48px;top:908px;width:2081px;height:1px;background:#d4d4d4"></div>
<div class="a" style="left:0;top:908px;width:47px;height:1px;background:#b5b5b5"></div>
<div class="a" style="left:48px;top:943px;width:2081px;height:1px;background:#d4d4d4"></div>
<div class="a" style="left:0;top:943px;width:47px;height:1px;background:#b5b5b5"></div>
<div class="a" style="left:48px;top:978px;width:2081px;height:1px;background:#d4d4d4"></div>
<div class="a" style="left:0;top:978px;width:47px;height:1px;background:#b5b5b5"></div>
<div class="a" style="left:48px;top:1013px;width:2081px;height:1px;background:#d4d4d4"></div>
<div class="a" style="left:0;top:1013px;width:47px;height:1px;background:#b5b5b5"></div>
<div class="a" style="left:162px;top:34px;width:1px;height:980px;background:#d4d4d4"></div>
<div class="a" style="left:162px;top:0;width:1px;height:33px;background:linear-gradient(#dcdcdc,#a8a8a8)"></div>
<div class="a" style="left:401px;top:34px;width:1px;height:980px;background:#d4d4d4"></div>
<div class="a" style="left:401px;top:0;width:1px;height:33px;background:linear-gradient(#dcdcdc,#a8a8a8)"></div>
<div class="a" style="left:685px;top:34px;width:1px;height:980px;background:#d4d4d4"></div>
<div class="a" style="left:685px;top:0;width:1px;height:33px;background:linear-gradient(#dcdcdc,#a8a8a8)"></div>
<div class="a" style="left:830px;top:34px;width:1px;height:980px;background:#d4d4d4"></div>
<div class="a" style="left:830px;top:0;width:1px;height:33px;background:linear-gradient(#dcdcdc,#a8a8a8)"></div>
<div class="a" style="left:973px;top:34px;width:1px;height:980px;background:#d4d4d4"></div>
<div class="a" style="left:973px;top:0;width:1px;height:33px;background:linear-gradient(#dcdcdc,#a8a8a8)"></div>
<div class="a" style="left:1117px;top:34px;width:1px;height:980px;background:#d4d4d4"></div>
<div class="a" style="left:1117px;top:0;width:1px;height:33px;background:linear-gradient(#dcdcdc,#a8a8a8)"></div>
<div class="a" style="left:1356px;top:34px;width:1px;height:980px;background:#d4d4d4"></div>
<div class="a" style="left:1356px;top:0;width:1px;height:33px;background:linear-gradient(#dcdcdc,#a8a8a8)"></div>
<div class="a" style="left:1640px;top:34px;width:1px;height:980px;background:#d4d4d4"></div>
<div class="a" style="left:1640px;top:0;width:1px;height:33px;background:linear-gradient(#dcdcdc,#a8a8a8)"></div>
<div class="a" style="left:1771px;top:34px;width:1px;height:980px;background:#d4d4d4"></div>
<div class="a" style="left:1771px;top:0;width:1px;height:33px;background:linear-gradient(#dcdcdc,#a8a8a8)"></div>
<div class="a" style="left:1886px;top:34px;width:1px;height:980px;background:#d4d4d4"></div>
<div class="a" style="left:1886px;top:0;width:1px;height:33px;background:linear-gradient(#dcdcdc,#a8a8a8)"></div>
<div class="a" style="left:2001px;top:34px;width:1px;height:980px;background:#d4d4d4"></div>
<div class="a" style="left:2001px;top:0;width:1px;height:33px;background:linear-gradient(#dcdcdc,#a8a8a8)"></div>
<div class="a" style="left:2116px;top:34px;width:1px;height:980px;background:#d4d4d4"></div>
<div class="a" style="left:2116px;top:0;width:1px;height:33px;background:linear-gradient(#dcdcdc,#a8a8a8)"></div>
<div class="a" style="left:0;top:33px;width:2130px;height:1px;background:#9e9e9e"></div>
<div class="a" style="left:47px;top:0;width:1px;height:1014px;background:#9e9e9e"></div>
<div class="a" style="left:47px;top:0;width:1px;height:33px;background:linear-gradient(#dcdcdc,#a8a8a8)"></div>
<div class="a" style="left:2129px;top:33px;width:1px;height:981px;background:#a6a6a6"></div>
<svg class="a" style="left:18px;top:4px" width="27" height="26"><polygon points="26,1 26,25 1,25" fill="#b7b7b7"/></svg>
<div class="a" style="left:45px;top:244px;width:2px;height:34px;background:#217346"></div>
<div class="ch" style="left:48px;width:114px;color:#1a1a1a">A</div>
<div class="ch" style="left:163px;width:238px;color:#1a1a1a">B</div>
<div class="ch" style="left:402px;width:283px;color:#1a1a1a">C</div>
<div class="ch" style="left:686px;width:144px;color:#1a1a1a">D</div>
<div class="ch" style="left:831px;width:142px;color:#1a1a1a">E</div>
<div class="ch" style="left:974px;width:143px;color:#217346">F</div>
<div class="ch" style="left:1118px;width:238px;color:#1a1a1a">G</div>
<div class="ch" style="left:1357px;width:283px;color:#1a1a1a">H</div>
<div class="ch" style="left:1641px;width:130px;color:#1a1a1a">I</div>
<div class="ch" style="left:1772px;width:114px;color:#1a1a1a">J</div>
<div class="ch" style="left:1887px;width:114px;color:#1a1a1a">K</div>
<div class="ch" style="left:2002px;width:114px;color:#1a1a1a">L</div>
<div class="rh" style="top:34px;color:#1a1a1a">26</div>
<div class="rh" style="top:69px;color:#1a1a1a">27</div>
<div class="rh" style="top:104px;color:#1a1a1a">28</div>
<div class="rh" style="top:139px;color:#1a1a1a">29</div>
<div class="rh" style="top:174px;color:#1a1a1a">30</div>
<div class="rh" style="top:209px;color:#1a1a1a">31</div>
<div class="rh" style="top:244px;color:#217346">32</div>
<div class="rh" style="top:279px;color:#1a1a1a">33</div>
<div class="rh" style="top:314px;color:#1a1a1a">34</div>
<div class="rh" style="top:349px;color:#1a1a1a">35</div>
<div class="rh" style="top:384px;color:#1a1a1a">36</div>
<div class="rh" style="top:419px;color:#1a1a1a">37</div>
<div class="rh" style="top:454px;color:#1a1a1a">38</div>
<div class="rh" style="top:489px;color:#1a1a1a">39</div>
<div class="rh" style="top:524px;color:#1a1a1a">40</div>
<div class="rh" style="top:559px;color:#1a1a1a">41</div>
<div class="rh" style="top:594px;color:#1a1a1a">42</div>
<div class="rh" style="top:629px;color:#1a1a1a">43</div>
<div class="rh" style="top:664px;color:#1a1a1a">44</div>
<div class="rh" style="top:699px;color:#1a1a1a">45</div>
<div class="rh" style="top:734px;color:#1a1a1a">46</div>
<div class="rh" style="top:769px;color:#1a1a1a">47</div>
<div class="rh" style="top:804px;color:#1a1a1a">48</div>
<div class="rh" style="top:839px;color:#1a1a1a">49</div>
<div class="rh" style="top:874px;color:#1a1a1a">50</div>
<div class="rh" style="top:909px;color:#1a1a1a">51</div>
<div class="rh" style="top:944px;color:#1a1a1a">52</div>
<div class="rh" style="top:979px;color:#1a1a1a">53</div>
<div class="cell" style="left:163px;width:238px;top:69px;text-align:center;font-weight:bold;font-size:24px;letter-spacing:-0.67px">No. of hours studied</div>
<div class="cell" style="left:402px;width:283px;top:69px;text-align:center;font-weight:bold;font-size:24px;letter-spacing:-0.49px">Prof marks (out of 1000)</div>
<div class="cell num" style="left:163px;width:238px;top:104px">15</div>
<div class="cell num" style="left:402px;width:283px;top:104px">760</div>
<div class="cell num" style="left:163px;width:238px;top:139px">13</div>
<div class="cell num" style="left:402px;width:283px;top:139px">743</div>
<div class="cell num" style="left:163px;width:238px;top:174px">13</div>
<div class="cell num" style="left:402px;width:283px;top:174px">732</div>
<div class="cell num" style="left:163px;width:238px;top:209px">11</div>
<div class="cell num" style="left:402px;width:283px;top:209px">720</div>
<div class="cell num" style="left:163px;width:238px;top:244px">10</div>
<div class="cell num" style="left:402px;width:283px;top:244px">699</div>
<div class="cell num" style="left:163px;width:238px;top:279px">12</div>
<div class="cell num" style="left:402px;width:283px;top:279px">711</div>
<div class="cell num" style="left:163px;width:238px;top:314px">12.5</div>
<div class="cell num" style="left:402px;width:283px;top:314px">728</div>
<div class="cell num" style="left:163px;width:238px;top:349px">9</div>
<div class="cell num" style="left:402px;width:283px;top:349px">700</div>
<div class="cell num" style="left:163px;width:238px;top:384px">7</div>
<div class="cell num" style="left:402px;width:283px;top:384px">685</div>
<div class="cell num" style="left:163px;width:238px;top:419px">16</div>
<div class="cell num" style="left:402px;width:283px;top:419px">770</div>
<div class="cell num" style="left:163px;width:238px;top:454px">12</div>
<div class="cell num" style="left:402px;width:283px;top:454px">723</div>
<div class="cell num" style="left:163px;width:238px;top:489px">10</div>
<div class="cell num" style="left:402px;width:283px;top:489px">705</div>
<div class="cell num" style="left:163px;width:238px;top:524px">7</div>
<div class="cell num" style="left:402px;width:283px;top:524px">676</div>
<div class="cell num" style="left:163px;width:238px;top:559px">9</div>
<div class="cell num" style="left:402px;width:283px;top:559px">702</div>
<div class="cell num" style="left:163px;width:238px;top:594px">9</div>
<div class="cell num" style="left:402px;width:283px;top:594px">733</div>
<div class="cell num" style="left:163px;width:238px;top:629px">15</div>
<div class="cell num" style="left:402px;width:283px;top:629px">741</div>
<div class="cell num" style="left:163px;width:238px;top:664px">12</div>
<div class="cell num" style="left:402px;width:283px;top:664px">712</div>
<div class="cell num" style="left:163px;width:238px;top:699px">9</div>
<div class="cell num" style="left:402px;width:283px;top:699px">687</div>
<div class="cell num" style="left:163px;width:238px;top:734px">15</div>
<div class="cell num" style="left:402px;width:283px;top:734px">670</div>
<div class="cell num" style="left:163px;width:238px;top:769px">12</div>
<div class="cell num" style="left:402px;width:283px;top:769px">701</div>
<div class="cell num" style="left:163px;width:238px;top:804px">8</div>
<div class="cell num" style="left:402px;width:283px;top:804px">700</div>
<div class="cell num" style="left:163px;width:238px;top:839px">8</div>
<div class="cell num" style="left:402px;width:283px;top:839px">677</div>
<div class="cell" style="left:835px;top:139px;letter-spacing:1.27px">correlation</div>
<div class="cell num" style="left:974px;width:143px;top:139px;letter-spacing:0.72px">0.6656823</div>
<div class="a" style="left:2132px;top:1px;width:25px;height:1013px;background:#dcdcdc"></div>
<div class="a" style="left:2132px;top:1px;width:25px;height:25px;background:#fff;border:1px solid #b1b1b1"></div>
<svg class="a" style="left:2138px;top:10px" width="13" height="8"><polygon points="0,7 6.5,0 13,7" fill="#777"/></svg>
<div class="a" style="left:2132px;top:472px;width:25px;height:519px;background:#fff;border:1px solid #b1b1b1"></div>
<div class="a" style="left:2132px;top:991px;width:25px;height:24px;background:#fff;border:1px solid #b1b1b1"></div>
<svg class="a" style="left:2138px;top:999px" width="13" height="8"><polygon points="0,0 6.500,7 13,0" fill="#777"/></svg></div>
<div id="tabsbar"><div class="a" style="left:0;top:0;width:2160px;height:1px;background:#ababab"></div>
<svg class="a" style="left:29px;top:11px" width="7" height="11"><polygon points="6.500,0 6.500,11 0,5.500" fill="#c6c6c6"/></svg>
<svg class="a" style="left:64px;top:11px" width="7" height="11"><polygon points="0,0 0,11 6.500,5.500" fill="#c6c6c6"/></svg>
<div class="a" style="left:118px;top:4px;width:1px;height:26px;background:#a6a6a6"></div>
<div class="a" style="left:193px;top:4px;width:1px;height:26px;background:#a6a6a6"></div>
<div class="a" style="left:315px;top:4px;width:1px;height:26px;background:#a6a6a6"></div>
<div class="a" style="left:130.5px;top:6.0px;font-size:19px;color:#444;letter-spacing:1.50px;">MMR</div>
<div class="a" style="left:208.8px;top:6.0px;font-size:19px;color:#444;letter-spacing:-0.54px;">SD,V,Skew</div>
<div class="a" style="left:327.7px;top:6.0px;font-size:19px;color:#444;letter-spacing:1.50px;">ND</div>
<div class="a" style="left:370px;top:0;width:110px;height:29px;background:#fff;border-bottom:2px solid #217346;border-left:1px solid #c0c0c0;border-right:1px solid #c0c0c0;border-top:1px solid #d4d4d4;box-sizing:border-box;height:31px"></div>
<div class="a" style="left:382.1px;top:6.0px;font-size:19.5px;color:#217346;letter-spacing:0.62px;font-weight:bold;">corr&amp;reg</div>
<svg class="a" style="left:518px;top:5.5px" width="24" height="24" viewBox="0 0 24 24" fill="none" stroke="#777" stroke-width="1.400"><circle cx="11.700" cy="11.700" r="10.500"/><path d="M6.800 11.700H16.600M11.700 6.800V16.600" stroke-width="1.900"/></svg>
<div class="a" style="left:1292px;top:9px;width:3px;height:3px;background:#a8a8a8"></div>
<div class="a" style="left:1292px;top:15.5px;width:3px;height:3px;background:#a8a8a8"></div>
<div class="a" style="left:1292px;top:22px;width:3px;height:3px;background:#a8a8a8"></div>
<div class="a" style="left:1312px;top:4px;width:819px;height:25px;background:#d9d9d9"></div>
<div class="a" style="left:1312px;top:4px;width:25px;height:25px;background:#fff;border:1px solid #ababab"></div>
<div class="a" style="left:1337px;top:4px;width:704px;height:25px;background:#fff;border:1px solid #ababab"></div>
<div class="a" style="left:2106px;top:4px;width:25px;height:25px;background:#fff;border:1px solid #ababab"></div>
<svg class="a" style="left:1320px;top:11px" width="7" height="11"><polygon points="6.500,0 6.500,11 0,5.500" fill="#777"/></svg>
<svg class="a" style="left:2116px;top:11px" width="7" height="11"><polygon points="0,0 0,11 6.500,5.500" fill="#777"/></svg></div>
<div id="status"><div class="a" style="left:0;top:0;width:2160px;height:1px;background:#c8c8c8"></div>
<div class="a" style="left:10.5px;top:10.0px;font-size:14.8px;color:#444;letter-spacing:0.00px;">Ready</div>
<div class="a" style="left:1715px;top:0;width:60px;height:33px;background:#c8c8c8"></div>
<svg class="a" style="left:1735px;top:7px" width="20" height="20" viewBox="0 0 20 20" fill="none" stroke="#777" stroke-width="1.200"><rect x="0.6" y="0.6" width="18" height="18"/><path d="M6.600 0.6V18.600M12.600 0.6V18.600M0.6 6.600H18.600M0.6 12.600H18.600"/></svg>
<svg class="a" style="left:1795px;top:7px" width="20" height="20" viewBox="0 0 20 20" fill="none" stroke="#777" stroke-width="1.200"><rect x="0.6" y="0.6" width="18.400" height="18"/><rect x="4.600" y="4.600" width="10.400" height="10"/><path d="M7 8H12.600M7 11.400H12.600"/></svg>
<svg class="a" style="left:1854px;top:7px" width="21" height="19" viewBox="0 0 21 19" fill="none" stroke="#777" stroke-width="1.200"><rect x="0.6" y="0.6" width="19" height="17"/><path d="M7.600 0.6V9.600M0.6 9.600H13.600V0.6"/></svg>
<div class="a" style="left:1903px;top:15.5px;width:12px;height:1.500px;background:#555"></div>
<div class="a" style="left:1923px;top:15.5px;width:148px;height:2px;background:#a6a6a6"></div>
<div class="a" style="left:1996px;top:12px;width:3px;height:8px;background:#b5b5b5"></div>
<div class="a" style="left:1998px;top:8px;width:8px;height:17.500px;background:#5e5e5e;border-radius:1px"></div>
<div class="a" style="left:2079px;top:15.5px;width:12px;height:1.500px;background:#555"></div><div class="a" style="left:2084.200px;top:10.299999999999955px;width:1.500px;height:12px;background:#555"></div>
<div class="a" style="left:2109.2px;top:10.0px;font-size:15.5px;color:#444;letter-spacing:0.05px;">120%</div>
<div class="a" style="left:1815px;top:29px;width:304px;height:12px;background:#2a2a2a;border-radius:10px 10px 0 0;box-shadow:0 -2px 7px 2px rgba(0,0,0,0.35)"></div></div>
<div id="taskbar"><div class="a" style="left:1790px;top:0;width:360px;height:60px;background:linear-gradient(90deg,rgba(32,32,32,0) 0,rgba(32,32,32,0.5) 25px,#202020 65px,#202020 328px,rgba(32,32,32,0) 360px)"></div>
<svg class="a" style="left:23px;top:17px" width="26" height="26" viewBox="23 1397 26 26" ><path d="M23.300 1401.200L33.500 1399.800V1409.300H23.300zM34.700 1399.600L48.300 1397.700V1409.300H34.700zM23.300 1410.500H33.500V1420L23.300 1418.600zM34.700 1410.500H48.300V1422.100L34.700 1420.200z" fill="#fff"/></svg>
<div class="a" style="left:73px;top:0;width:515px;height:60px;background:#333;border:2px solid #5d5d5d"></div>
<svg class="a" style="left:89px;top:16px" width="27" height="28" viewBox="89 1396 27 28" ><circle cx="106.500" cy="1405.800" r="7.300" fill="none" stroke="#e8e8e8" stroke-width="1.700"/><path d="M101.300 1411L90.500 1421.800" stroke="#e8e8e8" stroke-width="1.700"/></svg>
<div class="a" style="left:131.9px;top:21.0px;font-size:22.5px;color:#d8d8d8;letter-spacing:0.00px;">Type here to search</div>
<svg class="a" style="left:610px;top:16px" width="28" height="27" viewBox="610 1396 28 27" ><g fill="none" stroke="#fff" stroke-width="1.400"><rect x="612.200" y="1404.300" width="15" height="10.800"/><path d="M612.200 1398V1400.300H627.200V1398M612.200 1421.200V1418.900H627.200V1421.200M634.500 1398V1421.200"/></g><rect x="632.700" y="1404.500" width="3.600" height="3.600" fill="#fff"/></svg>
<svg class="a" style="left:684px;top:16px" width="34" height="28" viewBox="684 1396 34 28" ><path d="M685 1399.200Q685 1397.200 687 1397.200H697.500L700 1399.800H715Q717 1399.800 717 1401.800V1419.500Q717 1421.300 715 1421.300H687Q685 1421.300 685 1419.500z" fill="#f4b400"/><path d="M685 1403Q685 1401.500 687 1401.500H715Q717 1401.500 717 1403.500V1419.500Q717 1421.300 715 1421.300H687Q685 1421.300 685 1419.500z" fill="#ffd75e"/><path d="M690.500 1423V1413.500Q690.500 1411.500 692.500 1411.500H709.500Q711.500 1411.500 711.500 1413.500V1423H706.500V1416.500H695.500V1423z" fill="#3f97e0"/></svg>
<svg class="a" style="left:758px;top:12px" width="36" height="36" viewBox="758 1392 36 36" ><circle cx="775.7" cy="1409.7" r="16.700" fill="#db4437"/><path d="M775.7 1409.7L761.24 1401.3500000000001A16.700 16.700 0 0 0 777.2 1426.3300000000002z" fill="#0f9d58"/><path d="M775.7 1409.7L777.2 1426.3300000000002A16.700 16.700 0 0 0 791.4000000000001 1404.0H775.7z" fill="#ffcd40"/><circle cx="775.7" cy="1409.7" r="7.700" fill="#f1f1f1"/><circle cx="775.7" cy="1409.7" r="6" fill="#4285f4"/></svg>
<svg class="a" style="left:832px;top:11px" width="38" height="38" viewBox="832 1391 38 38" ><defs><linearGradient id="eg1" x1="0" y1="0" x2="1" y2="0.300"><stop offset="0" stop-color="#2fb5e9"/><stop offset="0.55" stop-color="#2fc3c9"/><stop offset="1" stop-color="#5fd66a"/></linearGradient></defs><circle cx="851" cy="1409.7" r="18" fill="#1572c6"/><path d="M833 1410.7A18 18 0 0 1 869 1408.7Q869 1416.7 861 1416.7Q855 1416.7 856 1411.7Q856 1403.7 847 1402.7Q836 1402.7 833 1410.7z" fill="url(#eg1)"/><path d="M843 1412.7Q843 1423.7 854 1425.7Q862 1425.7 866 1418.7Q857 1422.7 852 1415.7Q850 1410.7 854 1407.7Q844 1403.7 843 1412.7z" fill="#0d4d9b"/></svg>
<svg class="a" style="left:907px;top:11px" width="39" height="37" viewBox="907 1391 39 37" ><path d="M908 1404L926 1392.600L944.300 1404V1425Q944.300 1426.300 943 1426.300H909.300Q908 1426.300 908 1425z" fill="#0f6cbd"/><path d="M911.500 1403H941V1420H911.500z" fill="#fff"/><path d="M911.500 1403H941L926 1409z" fill="#d5d9dd"/><path d="M908 1404.500L926 1415L944.300 1404.500V1425Q944.300 1426.300 943 1426.300H909.300Q908 1426.300 908 1425z" fill="#2aa6ee"/><path d="M926 1415L944.300 1404.500V1425Q944.300 1426.300 943 1426.300z" fill="#36c2f6"/></svg>
<div class="a" style="left:983px;top:12px;width:36px;height:36px;background:#444"></div><div class="a" style="left:989px;top:18px;width:24px;height:24px;background:#fff"></div>
<svg class="a" style="left:991px;top:19px" width="21" height="22" viewBox="991 1399 21 22" ><path d="M997.500 1400.800Q1003 1399.500 1004.500 1402Q1009 1402 1009.300 1404.500Q1010.300 1410 1009 1415.500Q1008.300 1418.500 1005 1418.300Q1003 1418.200 1003.300 1416Q1003.600 1414.700 1005.500 1415V1412.500Q1002.500 1413 1001.800 1410.500Q1001 1415 998 1414.500Q993.500 1414 993 1409.500Q992.800 1406.500 994.500 1406.300H997.500z" fill="#2dbe60"/><path d="M993.500 1405.500L997 1401.500V1405.500z" fill="#2dbe60"/></svg>
<svg class="a" style="left:1057px;top:11px" width="39" height="38" viewBox="1057 1391 39 38" ><defs><radialGradient id="sg" cx="0.700" cy="0.250" r="0.900"><stop offset="0" stop-color="#8ec0ea"/><stop offset="0.500" stop-color="#4f8fd0"/><stop offset="1" stop-color="#2f6fb5"/></radialGradient></defs><circle cx="1076.100" cy="1409.700" r="17.900" fill="url(#sg)"/><text x="1064" y="1417" font-family="Liberation Serif" font-size="21" fill="#eef5fc">Σ</text><text x="1079.500" y="1410.500" font-family="Liberation Serif" font-size="12" fill="#eef5fc">α</text><path d="M1079.500 1418.500H1087.500" stroke="#eef5fc" stroke-width="1"/><circle cx="1083.500" cy="1416" r="0.900" fill="#eef5fc"/><circle cx="1083.500" cy="1421" r="0.900" fill="#eef5fc"/></svg>
<svg class="a" style="left:1131px;top:12px" width="39" height="36" viewBox="1131 1392 39 36" ><circle cx="1152" cy="1409.7" r="16.100" fill="#d35230"/><path d="M1152 1409.7V1393.6000000000001A16.100 16.100 0 0 0 1135.9 1409.7z" fill="#ed6c47"/><path d="M1152 1409.7V1393.6000000000001A16.100 16.100 0 0 1 1168.1 1409.7z" fill="#ff8f6b"/><rect x="1132.900" y="1401" width="18.200" height="18" rx="1.500" fill="#c43e1c"/><text x="1136.600" y="1415.700" font-family="Liberation Sans" font-weight="bold" font-size="15.500" fill="#fff">P</text></svg>
<div class="a" style="left:1190px;top:0;width:67px;height:60px;background:#48565d"></div><div class="a" style="left:1257px;top:0;width:6px;height:60px;background:#38454c;border-left:1.500px solid #2c373d"></div>
<svg class="a" style="left:1207px;top:13px" width="38" height="34" viewBox="1207 1393 38 34" ><rect x="1216.100" y="1394" width="27" height="31.700" rx="1.500" fill="#185c37"/><rect x="1216.100" y="1394" width="13.500" height="8" fill="#21a366"/><rect x="1229.600" y="1394" width="13.500" height="8" fill="#33c481"/><rect x="1216.100" y="1402" width="13.500" height="8" fill="#107c41"/><rect x="1229.600" y="1402" width="13.500" height="8" fill="#21a366"/><rect x="1229.600" y="1410" width="13.500" height="8" fill="#107c41"/><rect x="1208" y="1401" width="18.200" height="18" rx="1.500" fill="#107c41"/><text x="1212" y="1415.500" font-family="Liberation Sans" font-weight="bold" font-size="15" fill="#fff">X</text></svg>
<svg class="a" style="left:1284px;top:13px" width="34" height="34" viewBox="1284 1393 34 34" ><defs><linearGradient id="st" x1="0" y1="0" x2="0" y2="1"><stop offset="0" stop-color="#ffd800"/><stop offset="1" stop-color="#fbb900"/></linearGradient></defs><rect x="1284.700" y="1393.600" width="32.500" height="32.400" rx="1.500" fill="url(#st)"/><path d="M1301 1410H1316.300L1301 1424.700z" fill="#3a3a3a"/><path d="M1316.300 1410V1424.700H1301z" fill="#f0a800"/></svg>
<svg class="a" style="left:1358px;top:12px" width="36" height="36" viewBox="1358 1392 36 36" ><rect x="1359" y="1392.600" width="33.700" height="34" rx="10" fill="#4a8cff"/><rect x="1365" y="1403.500" width="15.500" height="12" rx="3" fill="#fff"/><path d="M1381.300 1407.500L1386.700 1403.800V1415.500L1381.300 1411.800z" fill="#fff"/></svg>
<div class="a" style="left:671px;top:57px;width:47.3px;height:3px;background:#a6dbf7"></div>
<div class="a" style="left:718.3px;top:57px;width:13.7px;height:3px;background:#86a9be"></div>
<div class="a" style="left:746px;top:57px;width:47.2px;height:3px;background:#a6dbf7"></div>
<div class="a" style="left:793.2px;top:57px;width:13.6px;height:3px;background:#86a9be"></div>
<div class="a" style="left:821px;top:57px;width:60.7px;height:3px;background:#a6dbf7"></div>
<div class="a" style="left:1121.2px;top:57px;width:47.3px;height:3px;background:#a6dbf7"></div>
<div class="a" style="left:1168.5px;top:57px;width:13.5px;height:3px;background:#86a9be"></div>
<div class="a" style="left:1190px;top:57px;width:66.5px;height:3px;background:#a6dbf7"></div>
<div class="a" style="left:1256.5px;top:57px;width:6.3px;height:3px;background:#86a9be"></div>
<div class="a" style="left:1271px;top:57px;width:61.2px;height:3px;background:#a6dbf7"></div>
<div class="a" style="left:1346px;top:57px;width:61.0px;height:3px;background:#a6dbf7"></div>
<svg class="a" style="left:1722px;top:23px" width="20" height="13" viewBox="1722 1403 20 13" ><path d="M1723.500 1414.300L1732 1405.200L1740.500 1414.300" fill="none" stroke="#f2f2f2" stroke-width="1.500"/></svg>
<svg class="a" style="left:1759px;top:17px" width="20" height="26" viewBox="1759 1397 20 26" ><g fill="none" stroke="#f2f2f2" stroke-width="1.300"><rect x="1761.500" y="1404" width="10" height="11.500" rx="2.500"/><path d="M1771.500 1408.500L1776.300 1405.500V1414L1771.500 1411"/><path d="M1763 1401Q1767.500 1398 1774 1401M1763 1418.500Q1767.500 1421.500 1774 1418.500" stroke-width="1"/></g></svg>
<svg class="a" style="left:1795px;top:16px" width="18" height="28" viewBox="1795 1396 18 28" ><rect x="1798" y="1397.800" width="11.200" height="19" rx="3" fill="#f2f2f2"/><path d="M1796.800 1410V1412.500Q1796.800 1419.300 1803.600 1419.300Q1810.400 1419.300 1810.400 1412.500V1410M1803.600 1419.300V1421.500M1800 1421.500H1807.200" fill="none" stroke="#f2f2f2" stroke-width="1.100"/></svg>
<svg class="a" style="left:1828px;top:23px" width="25" height="15" viewBox="1828 1403 25 15" ><rect x="1829.500" y="1404.600" width="20" height="11.600" fill="none" stroke="#f2f2f2" stroke-width="1.200"/><rect x="1850" y="1408" width="1.800" height="5" fill="#f2f2f2"/><rect x="1831.500" y="1406.600" width="8" height="7.600" fill="#f2f2f2"/></svg>
<svg class="a" style="left:1866px;top:20px" width="23" height="23" viewBox="1866 1400 23 23" ><g fill="none" stroke="#f2f2f2" stroke-width="1.200"><path d="M1868.500 1420.500A18 18 0 0 1 1886.500 1402.600"/><path d="M1873.500 1420.500A13 13 0 0 1 1886.500 1407.600" /><path d="M1878.500 1420.500A8 8 0 0 1 1886.500 1412.600"/></g><circle cx="1884.800" cy="1418.800" r="1.700" fill="#f2f2f2"/></svg>
<div class="a" style="left:1913.5px;top:9.0px;font-size:16.5px;color:#f0f0f0;letter-spacing:0.68px;">10:33 PM</div>
<div class="a" style="left:1903.6px;top:37.0px;font-size:16.5px;color:#f0f0f0;letter-spacing:1.23px;">23/04/2021</div>
<svg class="a" style="left:2029px;top:18px" width="31" height="25" viewBox="2029 1398 31 25" ><path d="M2029.900 1398.900L2034.200 1402.500V1421.900H2029.900zM2036 1405.100V1421.900H2040.100V1414.700L2043.750 1418.300L2047.400 1414.700V1421.900H2051.500V1405.100L2043.750 1412.500zM2053.900 1402.500L2058.100 1398.900V1421.900H2053.900z" fill="#f2f2f2"/></svg>
<svg class="a" style="left:2096px;top:17px" width="40" height="39" viewBox="2096 1397 40 39" ><path d="M2098 1398.500H2122V1416H2111L2106.500 1420.500V1416H2098z" fill="#f2f2f2"/><path d="M2102 1403H2118M2102 1407H2118M2102 1411H2112" stroke="#202020" stroke-width="1.200"/><circle cx="2121.600" cy="1421.400" r="11.500" fill="#2b2b2b" stroke="#8a8a8a" stroke-width="1"/><text x="2117.300" y="1427.300" font-family="Liberation Sans" font-size="16.500" fill="#fff">7</text></svg>
<div class="a" style="left:2152px;top:0;width:1px;height:60px;background:#6a6a6a"></div></div>
<div class="a" style="left:694px;top:514px;width:647px;height:311px;background:#f0f0f0;border:1px solid #666;box-shadow:0 3px 14px 2px rgba(0,0,0,0.33),0 0 3px rgba(0,0,0,0.25)"></div>
<div class="a" style="left:695px;top:515px;width:645px;height:44px;background:#fff"></div>
<div class="a" style="left:705.6px;top:530.0px;font-size:17.5px;color:#000;letter-spacing:0.01px;">Data Analysis</div>
<div class="a" style="left:1230.9px;top:527.0px;font-size:20px;color:#1a1a1a;letter-spacing:-1.50px;">?</div>
<svg class="a" style="left:1297px;top:528px" width="17" height="17" viewBox="0 0 17 17"><path d="M1 1L16 16M16 1L1 16" stroke="#111" stroke-width="1.300" fill="none"/></svg>
<div class="a" style="left:715.2px;top:568.0px;font-size:15.4px;color:#000;letter-spacing:0.04px;">Analysis Tools</div>
<div class="a" style="left:715.500px;top:583px;width:10px;height:1px;background:#000"></div>
<div class="a" style="left:715px;top:593px;width:480px;height:214px;background:#fff;border:1px solid #828790"></div>
<div class="a" style="left:1168px;top:594px;width:26px;height:212px;background:#f0f0f0"></div>
<div class="a" style="left:1168px;top:688px;width:24px;height:83px;background:#cdcdcd"></div>
<svg class="a" style="left:1174px;top:604px" width="14" height="11" viewBox="0 0 14 11"><path d="M1.500 9L6.500 3L11.500 9" stroke="#606060" stroke-width="2.600" fill="none"/></svg>
<svg class="a" style="left:1174px;top:787px" width="14" height="11" viewBox="0 0 14 11"><path d="M1.500 2L6.500 8L11.500 2" stroke="#606060" stroke-width="2.600" fill="none"/></svg>
<div class="a" style="left:717px;top:700px;width:450px;height:21px;background:#0078d7;outline:1px dotted #e0b080;outline-offset:-1px"></div>
<div class="a" style="left:719.7px;top:599.0px;font-size:15.4px;color:#000;letter-spacing:0.12px;">Fourier Analysis</div>
<div class="a" style="left:719.7px;top:620.0px;font-size:15.4px;color:#000;letter-spacing:0.44px;">Histogram</div>
<div class="a" style="left:719.7px;top:641.0px;font-size:15.4px;color:#000;letter-spacing:0.35px;">Moving Average</div>
<div class="a" style="left:719.7px;top:662.0px;font-size:15.4px;color:#000;letter-spacing:0.23px;">Random Number Generation</div>
<div class="a" style="left:719.7px;top:683.0px;font-size:15.4px;color:#000;letter-spacing:-0.04px;">Rank and Percentile</div>
<div class="a" style="left:719.7px;top:704.0px;font-size:15.4px;color:#fff;letter-spacing:0.06px;">Regression</div>
<div class="a" style="left:720.2px;top:725.0px;font-size:15.4px;color:#000;letter-spacing:0.30px;">Sampling</div>
<div class="a" style="left:720.7px;top:746.0px;font-size:15.4px;color:#000;letter-spacing:0.01px;">t-Test: Paired Two Sample for Means</div>
<div class="a" style="left:720.7px;top:767.0px;font-size:15.4px;color:#000;letter-spacing:0.02px;">t-Test: Two-Sample Assuming Equal Variances</div>
<div class="a" style="left:720.7px;top:788.0px;font-size:15.4px;color:#000;letter-spacing:0.06px;">t-Test: Two-Sample Assuming Unequal Variances</div>
<div class="a" style="left:1214px;top:571px;width:108px;height:35px;background:#e1e1e1;border:2px solid #0078d7"></div>
<div class="a" style="left:1214px;top:613px;width:108px;height:35px;background:#e1e1e1;border:1px solid #adadad"></div>
<div class="a" style="left:1214px;top:665px;width:108px;height:35px;background:#e1e1e1;border:1px solid #adadad"></div>
<div class="a" style="left:1256.8px;top:582.0px;font-size:15.4px;color:#000;letter-spacing:-0.91px;">OK</div>
<div class="a" style="left:1244.7px;top:624.0px;font-size:15.4px;color:#000;letter-spacing:-0.27px;">Cancel</div>
<div class="a" style="left:1251.3px;top:676.0px;font-size:15.4px;color:#000;letter-spacing:0.37px;">Help</div>
<div class="a" style="left:1252px;top:690px;width:11px;height:1px;background:#000"></div>
</body></html>
